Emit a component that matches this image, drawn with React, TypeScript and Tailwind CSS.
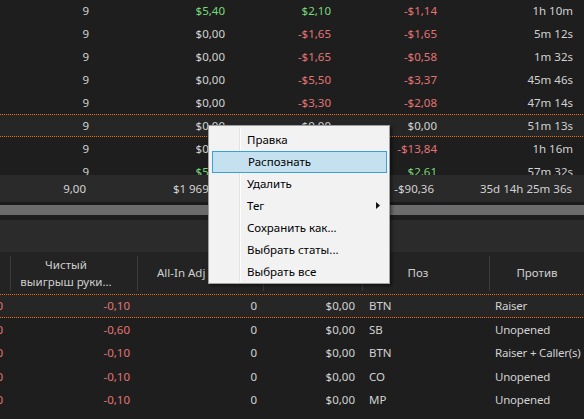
import React from "react"

type Tone = "g" | "r" | "n"

const toneClass = (t: Tone) =>
  t === "g" ? "text-[#79d879]" : t === "r" ? "text-[#e27474]" : "text-[#d2d2d2]"

const tone = (v: string): Tone => (v.startsWith("-") ? "r" : v === "$0,00" ? "n" : v.startsWith("$") ? "g" : "n")

const topRows = [
  ["9", "$5,40", "$2,10", "-$1,14", "1h 10m"],
  ["9", "$0,00", "-$1,65", "-$1,65", "5m 12s"],
  ["9", "$0,00", "-$1,65", "-$0,58", "1m 32s"],
  ["9", "$0,00", "-$5,50", "-$3,37", "45m 46s"],
  ["9", "$0,00", "-$3,30", "-$2,08", "47m 14s"],
  ["9", "$0,00", "$0,00", "$0,00", "51m 13s"],
  ["9", "$0,00", "-$0,55", "-$13,84", "1h 16m"],
  ["9", "$5,50", "$2,61", "$2,61", "57m 32s"],
]

const bottomRows = [
  ["-0,10", "-0,10", "0", "$0,00", "BTN", "Raiser"],
  ["-0,60", "-0,60", "0", "$0,00", "SB", "Unopened"],
  ["-0,10", "-0,10", "0", "$0,00", "BTN", "Raiser + Caller(s)"],
  ["-0,10", "-0,10", "0", "$0,00", "CO", "Unopened"],
  ["-0,10", "-0,10", "0", "$0,00", "MP", "Unopened"],
]

const menuItems = ["Правка", "Распознать", "Удалить", "Тег", "Сохранить как...", "Выбрать статы...", "Выбрать все"]

// dotted orange focus line, 1px on / 1px off
const Dots = () => (
  <div className="h-px shrink-0 bg-[repeating-linear-gradient(90deg,#f26a0c_0px,#f26a0c_1px,transparent_1px,transparent_2px)]" />
)

function HeadSep() {
  return <div className="w-px h-[35px] bg-[#3a3a3a] shrink-0" />
}

export default function App() {
  return (
    <div
      className="relative w-[584px] h-[419px] overflow-hidden bg-[#1e1e1e] text-[11.5px] text-[#d2d2d2] select-none"
      style={{ fontFamily: '"Noto Sans", "Open Sans", sans-serif' }}
    >
      {/* top grid */}
      <div className="h-[175px] overflow-hidden">
        <div className="-mt-px">
          {topRows.map((r, i) => {
            const sel = i === 5
            return (
              <div key={i} className={`flex flex-col h-[23px] ${sel ? "bg-[#262626]" : ""}`}>
                {sel && <Dots />}
                <div className="flex flex-1 items-center">
                  <div className="w-[96px] pr-[7px] text-right">{r[0]}</div>
                  <div className={`w-[136px] pr-[7px] text-right ${toneClass(tone(r[1]))}`}>{r[1]}</div>
                  <div className={`w-[106px] pr-[7px] text-right ${toneClass(tone(r[2]))}`}>{r[2]}</div>
                  <div className={`w-[106px] pr-[7px] text-right ${toneClass(tone(r[3]))}`}>{r[3]}</div>
                  <div className="w-[136px] pr-[7px] text-right">{r[4]}</div>
                </div>
                {sel && <Dots />}
              </div>
            )
          })}
        </div>
      </div>

      {/* totals */}
      <div className="flex h-[27px] items-center bg-[#2a2a2a]">
        <div className="w-[96px] pr-[10px] text-right">9,00</div>
        <div className="w-[136px] pr-[7px] text-right">$1 969,50</div>
        <div className="w-[106px] pr-[7px] text-right text-[#e27474]">-$85,20</div>
        <div className="w-[106px] pr-[10px] text-right">-$90,36</div>
        <div className="w-[136px] pr-[8px] text-right">35d 14h 25m 36s</div>
      </div>

      {/* scrollbar */}
      <div className="h-[3px] bg-[#1b1b1b]" />
      <div className="h-[10px] bg-[#6c6c6c]" />
      <div className="h-[5px] bg-[#1e1e1e]" />

      {/* group panel */}
      <div className="h-[32px] bg-[#2b2b2b]" />

      {/* hands grid */}
      <div className="-ml-[60px] w-[660px]">
        <div className="flex h-[42px] items-center bg-[#232323] text-[#cfcfcf]">
          <div className="w-[70px]" />
          <HeadSep />
          <div className="w-[126px] pr-4 text-center leading-[17px]">
            Чистый
            <br />
            выигрыш руки...
          </div>
          <HeadSep />
          <div className="w-[125px] pl-[19px] whitespace-nowrap">All-In Adj выигрыш</div>
          <HeadSep />
          <div className="w-[98px] text-center">$ Adj</div>
          <HeadSep />
          <div className="w-[126px] pr-4 text-center">Поз</div>
          <HeadSep />
          <div className="w-[110px] pr-4 text-center">Против</div>
        </div>

        {bottomRows.map((r, i) => {
          const sel = i === 0
          return (
            <div key={i} className={`flex flex-col h-[23.5px] ${sel ? "bg-[#262626]" : ""}`}>
              {sel && <Dots />}
              <div className="flex flex-1 items-center">
                <div className="w-[70px] pr-[7px] text-right text-[#e27474]">{r[0]}</div>
                <div className="w-[127px] pr-[7px] text-right text-[#e27474]">{r[1]}</div>
                <div className="w-[126px] pr-[6px] text-right">{r[2]}</div>
                <div className="w-[100px] pr-[8px] text-right">{r[3]}</div>
                <div className="w-[127px] pl-[6px]">{r[4]}</div>
                <div className="w-[110px] pl-[5px] whitespace-nowrap tracking-[-0.2px]">{r[5]}</div>
              </div>
              {sel && <Dots />}
            </div>
          )
        })}
      </div>

      {/* context menu */}
      <div className="absolute left-[208px] top-[125px] w-[182px] h-[159px] bg-[#f2f2f2] border border-[#a0a0a0] shadow-[2px_2px_3px_rgba(0,0,0,0.45)] pt-[3px] text-black">
        <div className="absolute left-[30px] top-[2px] bottom-[2px] w-px bg-[#e3e3e3]" />
        <div className="absolute left-[31px] top-[2px] bottom-[2px] w-px bg-white" />
        {menuItems.map((m, i) => (
          <div
            key={m}
            className={`relative flex h-[22px] items-center ml-[3px] mr-[2px] pl-[35px] ${
              i === 1 ? "bg-[#c5e1f0] border border-[#3aa0dc] pl-[34px]" : ""
            }`}
          >
            {m}
            {m === "Тег" && (
              <svg className="absolute right-[7px] top-[7px]" width="4" height="7" viewBox="0 0 4 7">
                <path d="M0 0 L4 3.5 L0 7 Z" fill="#111" />
              </svg>
            )}
          </div>
        ))}
      </div>
    </div>
  )
}
